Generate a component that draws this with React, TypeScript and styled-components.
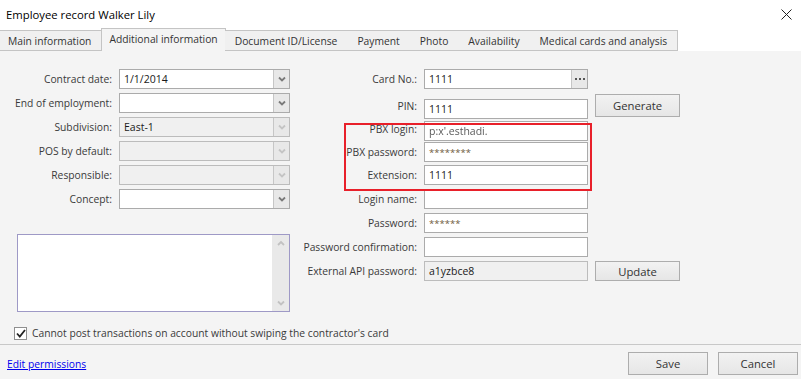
import React from "react";
import styled, { createGlobalStyle } from "styled-components";

const GlobalStyle = createGlobalStyle`
  html, body {
    margin: 0;
    padding: 0;
    background: #f4f4f4;
  }
  body {
    font-family: "Open Sans", "Noto Sans", sans-serif;
    font-size: 10.3px;
    color: #3c3c3c;
  }
`;

const Window = styled.div`
  width: 801px;
  height: 379px;
  display: flex;
  flex-direction: column;
  background: #f4f4f4;
  overflow: hidden;
`;

const TitleBar = styled.div`
  height: 28px;
  background: #fff;
  display: flex;
  align-items: center;
  justify-content: space-between;
  padding: 0 9px 0 6px;
  font-size: 11.3px;
  color: #000;
`;

const CloseIcon = styled.svg`
  width: 11px;
  height: 11px;
`;

const TabStrip = styled.div`
  height: 23px;
  background: #fff;
  display: flex;
  align-items: flex-end;
`;

const Tab = styled.div<{ active?: boolean }>`
  height: ${(p) => (p.active ? 23 : 21)}px;
  box-sizing: border-box;
  padding: 0 ${(p) => (p.active ? 7 : 10)}px;
  padding-bottom: ${(p) => (p.active ? 2 : 0)}px;
  display: flex;
  align-items: center;
  border: 1px solid #c4c4c4;
  border-left-width: ${(p) => (p.active ? 1 : 0)}px;
  border-bottom: ${(p) => (p.active ? "none" : "1px solid #c4c4c4")};
  background: ${(p) => (p.active ? "#f4f4f4" : "#f0f0f0")};
  color: #333;
  margin-right: -1px;
  &:first-child {
    border-left-width: 0;
    padding-left: 8px;
  }
`;

const Body = styled.div`
  flex: 1;
  display: flex;
  flex-direction: column;
`;

const Columns = styled.div`
  display: flex;
  padding-top: 18px;
`;

const LeftColumn = styled.div`
  width: 300px;
  display: flex;
  flex-direction: column;
`;

const LeftGrid = styled.div`
  display: grid;
  grid-template-columns: 112px 171px;
  column-gap: 7px;
  row-gap: 4px;
  grid-auto-rows: 20px;
`;

const RightGrid = styled.div`
  position: relative;
  display: grid;
  grid-template-columns: 117px 164px 85px;
  column-gap: 7px;
  grid-auto-rows: 20px;
  row-gap: 4px;
`;

const Label = styled.div<{ shift?: number }>`
  grid-column: 1;
  margin-top: ${(p) => p.shift || 0}px;
  display: flex;
  align-items: center;
  justify-content: flex-end;
  white-space: nowrap;
  color: #3a3a3a;
`;

const Field = styled.div<{ disabled?: boolean; shift?: number }>`
  grid-column: 2;
  margin-top: ${(p) => p.shift || 0}px;
  box-sizing: border-box;
  height: 20px;
  border: 1px solid ${(p) => (p.disabled ? "#bcbcbc" : "#ababab")};
  background: ${(p) => (p.disabled ? "#f0f0f0" : "#fff")};
  display: flex;
  align-items: stretch;
`;

const FieldText = styled.div<{ masked?: boolean; blurred?: boolean }>`
  flex: 1;
  display: flex;
  align-items: center;
  padding-left: 4px;
  color: ${(p) => (p.masked ? "#6e5a3c" : p.blurred ? "#5a5a5a" : "#1a1a1a")};
  font-size: ${(p) => (p.masked ? 9.5 : 10.5)}px;
  filter: ${(p) => (p.blurred ? "blur(0.5px)" : "none")};
  white-space: nowrap;
  overflow: hidden;
`;

const SideButton = styled.div<{ disabled?: boolean }>`
  width: 15px;
  border-left: 1px solid #c6c6c6;
  background: #e8e8e8;
  display: flex;
  align-items: center;
  justify-content: center;
  color: ${(p) => (p.disabled ? "#c4c4c4" : "#7a7a7a")};
`;

const Button = styled.div<{ width?: number; height?: number }>`
  box-sizing: border-box;
  width: ${(p) => p.width || 85}px;
  height: ${(p) => p.height || 22}px;
  border: 1px solid #adadad;
  background: linear-gradient(#f2f2f2, #e6e6e6);
  display: flex;
  align-items: center;
  justify-content: center;
  font-size: 11.3px;
  color: #333;
`;

const ButtonCell = styled.div<{ shift?: number }>`
  grid-column: 3;
  margin-top: ${(p) => p.shift || 0}px;
  display: flex;
  align-items: center;
`;

const Highlight = styled.div`
  position: absolute;
  left: 44px;
  top: 54px;
  width: 248px;
  height: 68px;
  box-sizing: border-box;
  border: 2px solid #e8202a;
  pointer-events: none;
`;

const Memo = styled.div`
  margin: 25px 0 0 17px;
  width: 273px;
  height: 78px;
  box-sizing: border-box;
  border: 1px solid #9e99c6;
  background: #fff;
  display: flex;
  justify-content: flex-end;
`;

const ScrollBar = styled.div`
  width: 17px;
  background: #e9e9e9;
  display: flex;
  flex-direction: column;
  justify-content: space-between;
  align-items: center;
  padding: 5px 0;
  color: #c2c2c2;
`;

const CheckRow = styled.div`
  display: flex;
  align-items: center;
  gap: 5px;
  padding-left: 14px;
  height: 16px;
  margin-top: 13px;
  color: #3a3a3a;
`;

const CheckBox = styled.div`
  width: 13px;
  height: 13px;
  box-sizing: border-box;
  border: 1px solid #8f8f8f;
  background: #fff;
  display: flex;
  align-items: center;
  justify-content: center;
`;

const Separator = styled.div`
  margin-top: 3px;
  height: 1px;
  background: #c8c8c8;
`;

const Footer = styled.div`
  display: flex;
  align-items: center;
  justify-content: space-between;
  padding: 7px 3px 0 7px;
`;

const Link = styled.a`
  color: #0000ee;
  text-decoration: underline;
  cursor: pointer;
`;

const FooterButtons = styled.div`
  display: flex;
  gap: 10px;
`;

const Chevron = ({ up }: { up?: boolean }) => (
  <svg width="8" height="6" viewBox="0 0 8 6">
    <path
      d={up ? "M1 5 L4 2 L7 5" : "M1 1.5 L4 4.5 L7 1.5"}
      fill="none"
      stroke="currentColor"
      strokeWidth="1.8"
    />
  </svg>
);

const Dots = () => (
  <svg width="10" height="3" viewBox="0 0 10 3">
    <rect x="0" y="0" width="2" height="2" fill="#555" />
    <rect x="4" y="0" width="2" height="2" fill="#555" />
    <rect x="8" y="0" width="2" height="2" fill="#555" />
  </svg>
);

const tabs = [
  "Main information",
  "Additional information",
  "Document ID/License",
  "Payment",
  "Photo",
  "Availability",
  "Medical cards and analysis",
];

const leftRows: { label: string; value: string; disabled?: boolean }[] = [
  { label: "Contract date:", value: "1/1/2014" },
  { label: "End of employment:", value: "" },
  { label: "Subdivision:", value: "East-1", disabled: true },
  { label: "POS by default:", value: "", disabled: true },
  { label: "Responsible:", value: "", disabled: true },
  { label: "Concept:", value: "" },
];

function App() {
  return (
    <Window>
      <GlobalStyle />
      <TitleBar>
        <span>Employee record Walker Lily</span>
        <CloseIcon viewBox="0 0 11 11">
          <path d="M0.5 0.5 L10.5 10.5 M10.5 0.5 L0.5 10.5" stroke="#222" strokeWidth="1" />
        </CloseIcon>
      </TitleBar>
      <TabStrip>
        {tabs.map((t) => (
          <Tab key={t} active={t === "Additional information"}>
            {t}
          </Tab>
        ))}
      </TabStrip>
      <Body>
        <Columns>
          <LeftColumn>
            <LeftGrid>
              {leftRows.map((r) => (
                <React.Fragment key={r.label}>
                  <Label>{r.label}</Label>
                  <Field disabled={r.disabled}>
                    <FieldText>{r.value}</FieldText>
                    <SideButton disabled={r.disabled}>
                      <Chevron />
                    </SideButton>
                  </Field>
                </React.Fragment>
              ))}
            </LeftGrid>
            <Memo>
              <ScrollBar>
                <Chevron up />
                <Chevron />
              </ScrollBar>
            </Memo>
          </LeftColumn>
          <div>
            <RightGrid>
              <Label>Card No.:</Label>
              <Field>
                <FieldText>1111</FieldText>
                <SideButton>
                  <Dots />
                </SideButton>
              </Field>
              <Label shift={6}>PIN:</Label>
              <Field shift={6}>
                <FieldText>1111</FieldText>
              </Field>
              <ButtonCell shift={5}>
                <Button height={23}>Generate</Button>
              </ButtonCell>
              <Label shift={4}>PBX login:</Label>
              <Field shift={4}>
                <FieldText blurred>p:x'.esthadi.</FieldText>
              </Field>
              <Label shift={1}>PBX password:</Label>
              <Field shift={1}>
                <FieldText masked>********</FieldText>
              </Field>
              <Label>Extension:</Label>
              <Field>
                <FieldText>1111</FieldText>
              </Field>
              <Label>Login name:</Label>
              <Field>
                <FieldText />
              </Field>
              <Label>Password:</Label>
              <Field>
                <FieldText masked>******</FieldText>
              </Field>
              <Label>Password confirmation:</Label>
              <Field>
                <FieldText />
              </Field>
              <Label>External API password:</Label>
              <Field disabled>
                <FieldText>a1yzbce8</FieldText>
              </Field>
              <ButtonCell>
                <Button height={20}>Update</Button>
              </ButtonCell>
              <Highlight />
            </RightGrid>
          </div>
        </Columns>
        <CheckRow>
          <CheckBox>
            <svg width="10" height="9" viewBox="0 0 10 9">
              <path d="M1 4.5 L3.8 7.5 L9 1" fill="none" stroke="#222" strokeWidth="1.8" />
            </svg>
          </CheckBox>
          <span>Cannot post transactions on account without swiping the contractor's card</span>
        </CheckRow>
        <Separator />
        <Footer>
          <Link>Edit permissions</Link>
          <FooterButtons>
            <Button width={80} height={23}>Save</Button>
            <Button width={80} height={23}>Cancel</Button>
          </FooterButtons>
        </Footer>
      </Body>
    </Window>
  );
}

export default App;
